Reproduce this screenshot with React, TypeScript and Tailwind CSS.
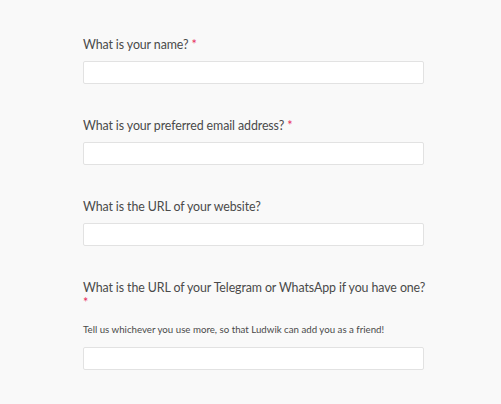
const fields = [
    { label: "What is your name?", required: true },
    { label: "What is your preferred email address?", required: true },
    { label: "What is the URL of your website?", required: false },
    {
        label: "What is the URL of your Telegram or WhatsApp if you have one?",
        required: true,
        starBreak: true,
        help: "Tell us whichever you use more, so that Ludwik can add you as a friend!",
    },
];

export default function App() {
    return (
        <div className="min-h-[404px] bg-[#f9f9f9] font-['Lato',sans-serif] text-[#4a4a4a]">
            <div className="ml-[83px] w-[341px] pt-[37px] flex flex-col gap-[34px]">
                {fields.map((f) => (
                    <div key={f.label} className="flex flex-col">
                        <label className="text-[12.4px] leading-[15px] tracking-[-0.1px] whitespace-nowrap">
                            {f.label}
                            {f.required &&
                                (f.starBreak ? (
                                    <span className="block text-[#e8325f]">*</span>
                                ) : (
                                    <span className="text-[#e8325f]"> *</span>
                                ))}
                        </label>
                        {f.help && <p className="mt-[12px] text-[9.7px] leading-[14px]">{f.help}</p>}
                        <input
                            type="text"
                            className={`${f.help ? "mt-[11px]" : "mt-[9px]"} h-[23px] w-full rounded-[2px] border border-[#e2e2e2] bg-white outline-none`}
                        />
                    </div>
                ))}
            </div>
        </div>
    );
}
